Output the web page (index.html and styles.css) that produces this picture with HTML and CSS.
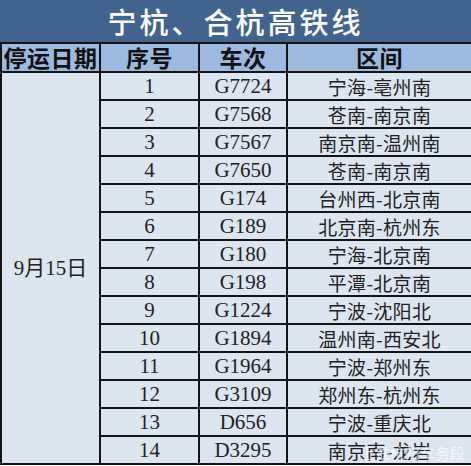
FILE: index.html
```html
<!DOCTYPE html>
<html lang="zh-CN">
<head>
<meta charset="utf-8">
<link rel="stylesheet" href="styles.css">
</head>
<body>
<div class="sheet">
  <div class="title">宁杭、合杭高铁线</div>
  <table class="grid">
    <colgroup>
      <col class="c1"><col class="c2"><col class="c3"><col class="c4">
    </colgroup>
    <thead>
      <tr><th>停运日期</th><th>序号</th><th>车次</th><th>区间</th></tr>
    </thead>
    <tbody>
      <tr><td class="date" rowspan="14">9月15日</td><td>1</td><td>G7724</td><td class="route">宁海-亳州南</td></tr>
      <tr><td>2</td><td>G7568</td><td class="route">苍南-南京南</td></tr>
      <tr><td>3</td><td>G7567</td><td class="route">南京南-温州南</td></tr>
      <tr><td>4</td><td>G7650</td><td class="route">苍南-南京南</td></tr>
      <tr><td>5</td><td>G174</td><td class="route">台州西-北京南</td></tr>
      <tr><td>6</td><td>G189</td><td class="route">北京南-杭州东</td></tr>
      <tr><td>7</td><td>G180</td><td class="route">宁海-北京南</td></tr>
      <tr><td>8</td><td>G198</td><td class="route">平潭-北京南</td></tr>
      <tr><td>9</td><td>G1224</td><td class="route">宁波-沈阳北</td></tr>
      <tr><td>10</td><td>G1894</td><td class="route">温州南-西安北</td></tr>
      <tr><td>11</td><td>G1964</td><td class="route">宁波-郑州东</td></tr>
      <tr><td>12</td><td>G3109</td><td class="route">郑州东-杭州东</td></tr>
      <tr><td>13</td><td>D656</td><td class="route">宁波-重庆北</td></tr>
      <tr><td>14</td><td>D3295</td><td class="route">南京南-龙岩</td></tr>
    </tbody>
  </table>
  <div class="watermark">上铁杭州车务段</div>
</div>
</body>
</html>
```

FILE: styles.css
```css
html, body {
  margin: 0;
  padding: 0;
  background: #ffffff;
}
.sheet {
  position: relative;
  width: 471px;
  height: 466px;
  overflow: hidden;
  font-family: "Liberation Serif", "Noto Sans CJK SC", serif;
}
.title {
  height: 42px;
  background: #41648f;
  color: #ffffff;
  font-family: "Noto Sans CJK SC", sans-serif;
  font-size: 29px;
  font-weight: 500;
  line-height: 1;
  display: flex;
  align-items: center;
  justify-content: center;
  letter-spacing: 3px;
}
.grid {
  border-collapse: collapse;
  table-layout: fixed;
  width: 471px;
}
.c1 { width: 99px; }
.c2 { width: 99px; }
.c3 { width: 88px; }
.c4 { width: 185px; }
.grid th, .grid td {
  border: 2px solid #151515;
  padding: 0;
  text-align: center;
  vertical-align: middle;
  white-space: nowrap;
  line-height: 1;
}
.grid th {
  height: 27px;
  background: #9cbadf;
  color: #111111;
  font-family: "Noto Sans CJK SC", sans-serif;
  font-size: 23px;
  font-weight: 700;
  letter-spacing: 0.5px;
}
.grid td {
  height: 26px;
  background: #dce6f1;
  color: #222222;
  font-size: 21px;
}
.grid td.route {
  font-family: "Noto Sans CJK SC", sans-serif;
  font-size: 19px;
  font-weight: 400;
  letter-spacing: 0.3px;
}
.grid td.date {
  font-size: 21px;
}
.watermark {
  position: absolute;
  right: 6px;
  bottom: 6px;
  color: rgba(255, 255, 255, 0.7);
  font-family: "Noto Sans CJK SC", sans-serif;
  font-size: 15px;
  line-height: 1;
}
```
